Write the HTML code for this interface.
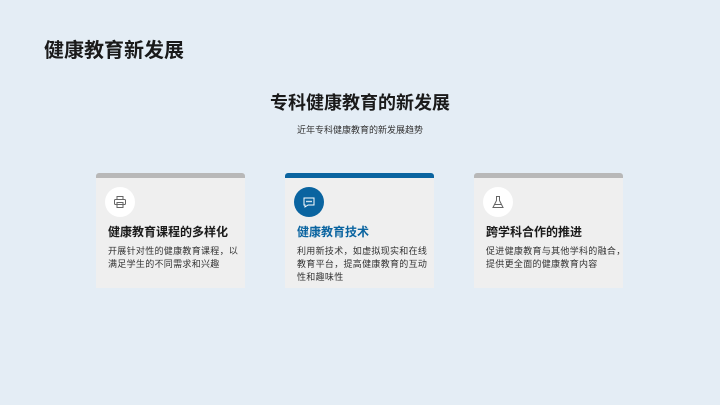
<!DOCTYPE html>
<html><head><meta charset="utf-8"><style>
body{margin:0;width:720px;height:405px;background:#e4edf5;font-family:"Liberation Sans","Noto Sans CJK SC",sans-serif;position:relative;overflow:hidden;color:#1a1a1a}
.t{position:absolute;left:44px;top:34px;font-size:20px;font-weight:bold}
.h{position:absolute;left:0;width:720px;text-align:center;top:89px;font-size:18px;font-weight:bold}
.s{position:absolute;left:0;width:720px;text-align:center;top:123px;font-size:9px;color:#333}
.c{position:absolute;top:173px;width:149px;height:115px;background:#efefef;border-top:5px solid #b8b8b8;border-radius:3px 3px 0 0;box-sizing:border-box}
.c.b{border-top-color:#0a64a0}
.ic{position:absolute;left:9px;top:9px;width:30px;height:30px;border-radius:50%;background:#fff;display:flex;align-items:center;justify-content:center}
.b .ic{background:#0a64a0}
.ct{position:absolute;left:12px;top:45px;font-size:12px;font-weight:bold}
.b .ct{color:#0a64a0}
.cb{position:absolute;left:12px;top:67px;white-space:nowrap;font-size:9px;letter-spacing:0.3px;line-height:13px;color:#333}
</style></head><body>
<div class="t">健康教育新发展</div>
<div class="h">专科健康教育的新发展</div>
<div class="s">近年专科健康教育的新发展趋势</div>
<div class="c" style="left:96px"><div class="ic"><svg width="14" height="14" viewBox="0 0 14 14" fill="none" stroke="#666" stroke-width="1"><rect x="4" y="1.5" width="6" height="3"/><rect x="1.5" y="4.5" width="11" height="5" rx="1"/><rect x="4" y="7.5" width="6" height="5"/></svg></div><div class="ct">健康教育课程的多样化</div><div class="cb">开展针对性的健康教育课程，以<br>满足学生的不同需求和兴趣</div></div>
<div class="c b" style="left:285px"><div class="ic"><svg width="14" height="14" viewBox="0 0 14 14" fill="none" stroke="#fff" stroke-width="1"><path d="M2 3h10v7H6l-3 2v-2H2z"/><circle cx="5" cy="6.5" r=".4"/><circle cx="7" cy="6.5" r=".4"/><circle cx="9" cy="6.5" r=".4"/></svg></div><div class="ct">健康教育技术</div><div class="cb">利用新技术，如虚拟现实和在线<br>教育平台，提高健康教育的互动<br>性和趣味性</div></div>
<div class="c" style="left:474px"><div class="ic"><svg width="14" height="14" viewBox="0 0 14 14" fill="none" stroke="#666" stroke-width="1"><path d="M5 1.5h4M5.5 1.5v4L2 12.5h10L8.5 5.5v-4M3.5 9.5h7"/></svg></div><div class="ct">跨学科合作的推进</div><div class="cb">促进健康教育与其他学科的融合，<br>提供更全面的健康教育内容</div></div>
</body></html>
